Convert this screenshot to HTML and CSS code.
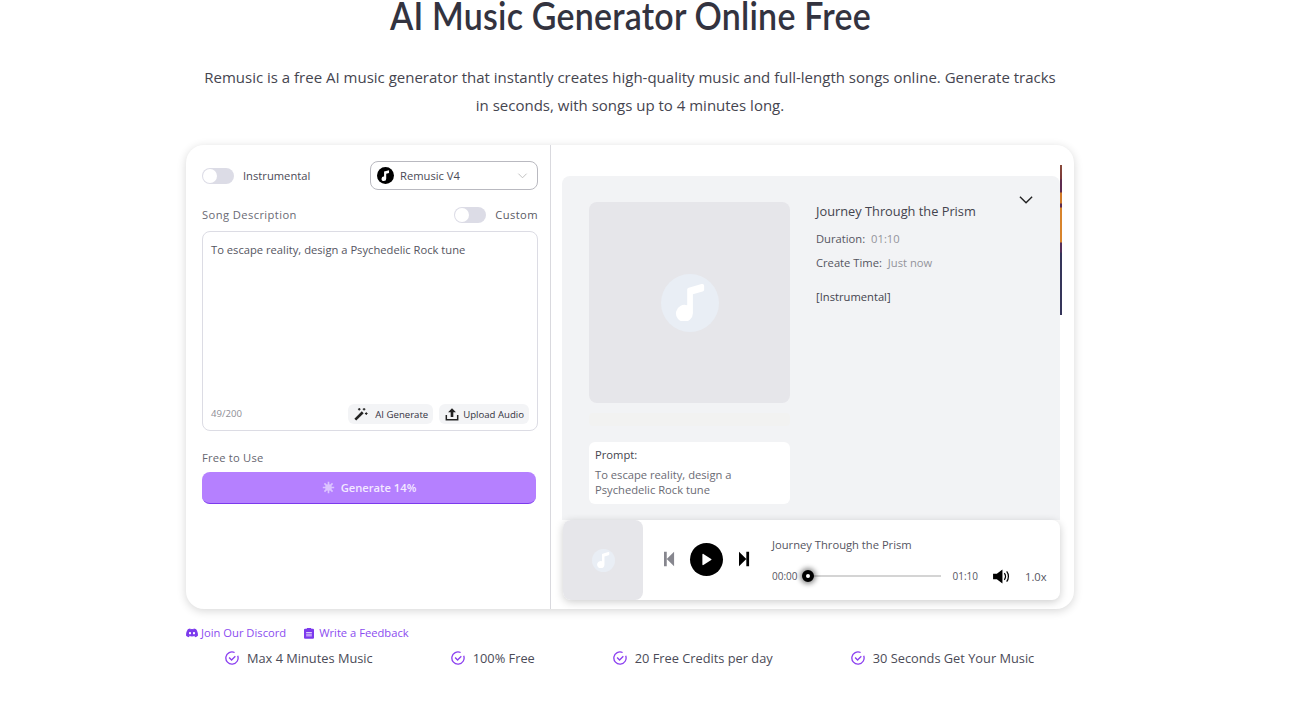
FILE: index.html
```html
<!DOCTYPE html>
<html lang="en">
<head>
    <meta charset="UTF-8">
    <title>AI Music Generator Online Free</title>
    <link rel="stylesheet" href="styles.css">
</head>
<body>
    <h1><span>AI Music Generator Online Free</span></h1>
    <p class="intro">Remusic is a free AI music generator that instantly creates high-quality music and full-length songs online. Generate tracks in seconds, with songs up to 4 minutes long.</p>

    <div class="card">
        <div class="left">
            <div class="row top-row">
                <div class="switch-group">
                    <span class="switch"></span>
                    <span>Instrumental</span>
                </div>
                <div class="select">
                    <span class="model-icon">
                        <svg viewBox="0 0 24 24" width="17" height="17"><circle cx="12" cy="12" r="12" fill="#000"/><path d="M10 6.500l7-2v4l-4 1.200v6.800a3.300 3.300 0 1 1-3-3.200z" fill="#fff"/></svg>
                    </span>
                    <span class="select-name">Remusic V4</span>
                    <svg class="select-arrow" viewBox="0 0 12 12" width="11" height="11"><path d="M1.500 4l4.500 4.500L10.500 4" fill="none" stroke="#bbb" stroke-width="1"/></svg>
                </div>
            </div>
            <div class="row desc-row">
                <span class="desc-label">Song Description</span>
                <div class="switch-group small-gap">
                    <span class="switch"></span>
                    <span class="custom-label">Custom</span>
                </div>
            </div>
            <div class="textarea">
                <div class="textarea-text">To escape reality, design a Psychedelic Rock tune</div>
                <div class="textarea-foot">
                    <span class="count">49/200</span>
                    <div class="tools">
                        <span class="tool">
                            <svg viewBox="0 0 16 16" width="14" height="14"><path d="M1.500 14.500l8.500-8.500" stroke="#222" stroke-width="3" fill="none"/><path d="M11.500 1v3M10 2.500h3M14 6v3M12.500 7.500h3M6 1v3M4.500 2.500h3" stroke="#222" stroke-width="1.200" fill="none"/></svg>
                            <span class="tool-label">AI Generate</span>
                        </span>
                        <span class="tool tool-upload">
                            <svg viewBox="0 0 16 16" width="14" height="14"><path d="M8 1.500L3.500 6h3v5.500h3V6h3z" fill="#222"/><path d="M1.500 9v5.500h13V9" stroke="#222" stroke-width="1.700" fill="none"/></svg>
                            <span>Upload Audio</span>
                        </span>
                    </div>
                </div>
            </div>
            <div class="free">Free to Use</div>
            <button class="generate">
                <svg class="spinner" viewBox="0 0 16 16" width="13" height="13"><circle cx="8" cy="8" r="4" fill="#e6d6ff"/><g stroke="#e6d6ff" stroke-width="2" fill="none"><path d="M8 1v4M8 11v4M1 8h4M11 8h4M3 3l3 3M10 10l3 3M3 13l3-3M10 6l3-3"/></g></svg>
                <span>Generate 14%</span>
            </button>
        </div>

        <div class="right">
            <div class="stripe"></div>
            <div class="song">
                <div class="song-side">
                    <div class="cover">
                        <span class="note note-big">
                            <svg viewBox="0 0 24 24" width="37" height="37"><path d="M10.500 3.800c0-.6.400-1.100 1-1.300l8.300-2.500c.9-.3 1.700.4 1.700 1.300v2.200c0 .6-.4 1.100-1 1.300l-6.300 1.900v12.300a5.500 5.500 0 1 1-3.700-5.200z" fill="#fff"/></svg>
                        </span>
                    </div>
                    <div class="waveform"></div>
                    <div class="prompt">
                        <div class="prompt-title">Prompt:</div>
                        <div class="prompt-text">To escape reality, design a Psychedelic Rock tune</div>
                    </div>
                </div>
                <div class="song-info">
                    <div class="song-title">Journey Through the Prism</div>
                    <div class="meta">Duration:<span>01:10</span></div>
                    <div class="meta">Create Time:<span>Just now</span></div>
                    <div class="lyrics">[Instrumental]</div>
                </div>
                <svg class="collapse" viewBox="0 0 16 10" width="15" height="10"><path d="M1 1.500l6.500 6.500L14 1.500" fill="none" stroke="#222" stroke-width="1.500"/></svg>
            </div>

            <div class="player">
                <div class="player-cover">
                    <span class="note note-small">
                        <svg viewBox="0 0 24 24" width="16" height="16"><path d="M10.500 3.800c0-.6.400-1.100 1-1.300l8.300-2.500c.9-.3 1.700.4 1.700 1.300v2.200c0 .6-.4 1.100-1 1.300l-6.300 1.900v12.300a5.500 5.500 0 1 1-3.700-5.200z" fill="#fff"/></svg>
                    </span>
                </div>
                <div class="controls">
                    <svg class="prev" viewBox="0 0 12 16" width="11" height="16"><path d="M0 0h3v16H0zM3 8l8-8v16z" fill="#86868e"/></svg>
                    <span class="play">
                        <svg viewBox="0 0 12 14" width="11" height="13"><path d="M1.500 1.500v11c0 .6.600.9 1.100.6l8.500-5.500c.5-.3.500-.9 0-1.200L2.600.900c-.5-.3-1.100 0-1.100.6z" fill="#fff"/></svg>
                    </span>
                    <svg class="next" viewBox="0 0 12 16" width="11" height="16"><path d="M0 0l8 8-8 8zM8 0h3v16H8z" fill="#000"/></svg>
                </div>
                <div class="track">
                    <div class="track-title">Journey Through the Prism</div>
                    <div class="track-line">
                        <span class="time">00:00</span>
                        <div class="bar"><span class="knob"></span></div>
                        <span class="time end">01:10</span>
                        <svg class="volume" viewBox="0 0 18 16" width="17" height="15"><path d="M0 5h4l6-4.500v15L4 11H0z" fill="#000"/><path d="M12 4.500c1.500 2 1.500 5 0 7M14.500 2.500c2.500 3 2.500 8 0 11" fill="none" stroke="#000" stroke-width="1.300"/></svg>
                        <span class="speed">1.0x</span>
                    </div>
                </div>
            </div>
        </div>
    </div>

    <div class="links">
        <a>
            <svg viewBox="0 0 24 18" width="12" height="10"><path d="M20.300 1.500A19 19 0 0 0 15.500 0l-.6 1.300a18 18 0 0 0-5.800 0L8.500 0a19 19 0 0 0-4.800 1.500C.6 6-.2 10.400.200 14.700A19 19 0 0 0 6 17.700l1.200-2-1.900-.9.500-.4a13.500 13.500 0 0 0 12.400 0l.5.400-1.900.9 1.200 2a19 19 0 0 0 5.800-3c.5-5-.8-9.300-3.500-13.200zM8 12c-1.100 0-2.100-1.100-2.100-2.400S6.800 7.200 8 7.200s2.100 1.100 2.100 2.400S9.200 12 8 12zm8 0c-1.100 0-2.100-1.100-2.100-2.400s.9-2.400 2.100-2.400 2.100 1.100 2.100 2.400-.9 2.400-2.100 2.400z" fill="#7c3aed"/></svg>
            Join Our Discord
        </a>
        <a class="feedback">
            <svg viewBox="0 0 14 16" width="10" height="12"><path d="M1.500 2H4V1h6v1h2.500A1.500 1.500 0 0 1 14 3.500v11a1.500 1.500 0 0 1-1.500 1.500h-11A1.500 1.500 0 0 1 0 14.500v-11A1.500 1.500 0 0 1 1.500 2zM3 6.500v1h8v-1zM3 9v1h8V9zm0 2.500v1h8v-1z" fill="#7c3aed" fill-rule="evenodd"/></svg>
            Write a Feedback
        </a>
    </div>

    <div class="features">
        <div class="feature"><svg viewBox="0 0 16 16" width="14" height="14"><path d="M14.500 5.500A7 7 0 1 1 11 1.700" fill="none" stroke="#8b3ff0" stroke-width="1.500"/><path d="M4.700 7.500L7.500 10.300 11.800 6" fill="none" stroke="#8b3ff0" stroke-width="1.500"/></svg>Max 4 Minutes Music</div>
        <div class="feature"><svg viewBox="0 0 16 16" width="14" height="14"><path d="M14.500 5.500A7 7 0 1 1 11 1.700" fill="none" stroke="#8b3ff0" stroke-width="1.500"/><path d="M4.700 7.500L7.500 10.300 11.800 6" fill="none" stroke="#8b3ff0" stroke-width="1.500"/></svg>100% Free</div>
        <div class="feature"><svg viewBox="0 0 16 16" width="14" height="14"><path d="M14.500 5.500A7 7 0 1 1 11 1.700" fill="none" stroke="#8b3ff0" stroke-width="1.500"/><path d="M4.700 7.500L7.500 10.300 11.800 6" fill="none" stroke="#8b3ff0" stroke-width="1.500"/></svg>20 Free Credits per day</div>
        <div class="feature"><svg viewBox="0 0 16 16" width="14" height="14"><path d="M14.500 5.500A7 7 0 1 1 11 1.700" fill="none" stroke="#8b3ff0" stroke-width="1.500"/><path d="M4.700 7.500L7.500 10.300 11.800 6" fill="none" stroke="#8b3ff0" stroke-width="1.500"/></svg>30 Seconds Get Your Music</div>
    </div>
</body>
</html>
```

FILE: styles.css
```css
* {
    box-sizing: border-box;
}

html, body {
    height: 707px;
    overflow: hidden;
}

body {
    margin: 0;
    width: 1260px;
    background: #fff;
    color: #4b4b57;
    font-family: "Open Sans", sans-serif;
    font-size: 11.2px;
}

h1 {
    margin: -8px 0 0;
    text-align: center;
    font-family: Lato, sans-serif;
    font-size: 39px;
    line-height: 46px;
    font-weight: 600;
    color: #33333f;
}

h1 span {
    display: inline-block;
    letter-spacing: 0.25px;
    transform: scaleX(0.87);
}

.intro {
    width: 860px;
    margin: 25px auto 0;
    text-align: center;
    font-size: 15px;
    line-height: 28px;
    color: #45454f;
}

.card {
    display: flex;
    width: 888px;
    height: 464px;
    margin: 26px 0 0 186px;
    border-radius: 18px;
    background: #fff;
    box-shadow: 0 2px 10px rgba(0, 0, 0, 0.16);
}

.left {
    width: 365px;
    padding: 16px 12px 0 16px;
    border-right: 1px solid #d9d9de;
}

.row {
    display: flex;
    justify-content: space-between;
    align-items: center;
}

.top-row {
    height: 29px;
}

.switch-group {
    display: flex;
    align-items: center;
    gap: 9px;
}

.switch {
    position: relative;
    display: block;
    width: 32px;
    height: 16px;
    border-radius: 8px;
    background: #dcdce6;
}

.switch::after {
    content: "";
    position: absolute;
    left: 1px;
    top: 1px;
    width: 14px;
    height: 14px;
    border-radius: 50%;
    background: #fff;
}

.select {
    display: flex;
    align-items: center;
    width: 168px;
    height: 29px;
    padding: 0 9px 0 6px;
    border: 1px solid #b9b9c0;
    border-radius: 8px;
    color: #4b4b57;
}

.model-icon {
    display: flex;
}

.select-name {
    margin-left: 6px;
    flex: 1;
}

.desc-row {
    margin-top: 15px;
    height: 20px;
    letter-spacing: 0.4px;
    color: #6a6a74;
}

.desc-label {
    margin-bottom: 2px;
}

.custom-label {
    margin-bottom: 2px;
    color: #5a5a64;
}

.textarea {
    display: flex;
    flex-direction: column;
    justify-content: space-between;
    height: 200px;
    margin-top: 6px;
    padding: 10px 8px 6px;
    border: 1px solid #dcdce4;
    border-radius: 8px;
}

.textarea-text {
    line-height: 16px;
    color: #55555f;
}

.textarea-foot {
    display: flex;
    justify-content: space-between;
    align-items: center;
}

.count {
    margin-bottom: 2px;
    font-size: 9.6px;
    color: #8e8e96;
}

.tools {
    display: flex;
    gap: 6px;
}

.tool {
    display: flex;
    align-items: center;
    gap: 4px;
    height: 20px;
    padding: 0 5px 0 6px;
    border-radius: 6px;
    background: #f3f4f6;
    font-size: 9.6px;
    color: #33333f;
}

.tool-label {
    margin-left: 3px;
}

.free {
    margin-top: 19px;
    line-height: 16px;
    letter-spacing: 0.2px;
    color: #66666f;
}

.generate {
    display: flex;
    justify-content: center;
    align-items: center;
    gap: 6px;
    width: 334px;
    height: 32px;
    margin-top: 6px;
    border: none;
    border-bottom: 1px solid #7c3aed;
    border-radius: 8px;
    background: #b580ff;
    color: #f3e9ff;
    font-family: inherit;
    font-size: 11.2px;
    font-weight: 600;
}

.spinner {
    opacity: 0.8;
}

.right {
    position: relative;
    flex: 1;
    padding: 31px 14px 8px 11px;
}

.stripe {
    position: absolute;
    left: 509px;
    top: 20px;
    width: 2px;
    height: 150px;
    background: linear-gradient(#8a4a3a 0, #7a3a3a 14px, #5e2c50 15px, #5e2c50 27px, #d07a28 28px, #d07a28 38px, #5e2c50 39px, #5e2c50 42px, #d8842c 43px, #d8842c 77px, #56305a 78px, #56305a 87px, #35355a 88px, #35355a 100%);
}

.song {
    position: relative;
    display: flex;
    height: 344px;
    padding: 26px 0 0 27px;
    border-radius: 8px 8px 0 0;
    background: #f2f3f5;
}

.song-side {
    width: 201px;
    flex: none;
}

.cover {
    display: flex;
    justify-content: center;
    align-items: center;
    height: 201px;
    border-radius: 8px;
    background: #e6e6ea;
}

.note {
    display: flex;
    justify-content: center;
    align-items: center;
    border-radius: 50%;
    background: #e9eef5;
}

.note-big {
    width: 58px;
    height: 58px;
}

.note-small {
    width: 23px;
    height: 23px;
}

.waveform {
    height: 13px;
    margin-top: 10px;
    border-radius: 4px;
    background: #f2f2f1;
}

.prompt {
    height: 62px;
    margin-top: 16px;
    padding: 5px 6px;
    border-radius: 6px;
    background: #fff;
}

.prompt-title {
    line-height: 16px;
    color: #44444e;
}

.prompt-text {
    margin-top: 4px;
    line-height: 15px;
    color: #6b6b74;
}

.song-info {
    padding: 0 0 0 26px;
}

.song-title {
    margin-top: -1px;
    font-size: 12.8px;
    line-height: 20px;
    color: #44444e;
}

.meta {
    margin-top: 8px;
    line-height: 16px;
    color: #55555f;
}

.song-title + .meta {
    margin-top: 10px;
}

.meta span {
    margin-left: 6px;
    color: #94949b;
}

.lyrics {
    margin-top: 18px;
    line-height: 16px;
    color: #44444e;
}

.collapse {
    position: absolute;
    left: 457px;
    top: 19px;
}

.player {
    position: absolute;
    left: 12px;
    top: 375px;
    display: flex;
    width: 497px;
    height: 80px;
    border-radius: 8px;
    background: #fff;
    box-shadow: 0 2px 8px rgba(0, 0, 0, 0.2);
}

.player-cover {
    display: flex;
    justify-content: center;
    align-items: center;
    width: 80px;
    border-radius: 8px;
    background: #e6e6ea;
}

.controls {
    display: flex;
    align-items: center;
    gap: 15px;
    margin-left: 21px;
    padding-bottom: 2px;
}

.next {
    margin-left: 1px;
}

.play {
    display: flex;
    justify-content: center;
    align-items: center;
    width: 33px;
    height: 33px;
    border-radius: 50%;
    background: #000;
}

.track {
    flex: 1;
    margin-left: 22px;
    padding: 17px 12px 0 0;
}

.track-title {
    line-height: 15px;
    color: #55555f;
}

.track-line {
    display: flex;
    align-items: center;
    margin-top: 16px;
    height: 16px;
    font-size: 10px;
    color: #55555f;
}

.bar {
    position: relative;
    width: 138px;
    height: 2px;
    margin-left: 5px;
    background: #d4d4d4;
}

.knob {
    position: absolute;
    left: -1px;
    top: -5px;
    width: 12px;
    height: 12px;
    border: 4px solid #000;
    border-radius: 50%;
    background: #fff;
    box-shadow: 0 0 5px 2px rgba(0, 0, 0, 0.45);
}

.end {
    margin-left: 12px;
}

.volume {
    margin-left: 15px;
}

.speed {
    margin-left: 15px;
    font-size: 11.2px;
}

.links {
    display: flex;
    gap: 18px;
    margin: 16px 0 0 186px;
    line-height: 15px;
}

.links a {
    display: flex;
    align-items: center;
    gap: 3px;
    color: #8b4cf0;
}

.links .feedback {
    gap: 5px;
}

.features {
    display: flex;
    gap: 78px;
    margin-top: 8px;
    padding-left: 225px;
    font-size: 12.8px;
    line-height: 20px;
    color: #4b4b57;
}

.feature {
    display: flex;
    align-items: center;
    gap: 8px;
    white-space: nowrap;
}
```
